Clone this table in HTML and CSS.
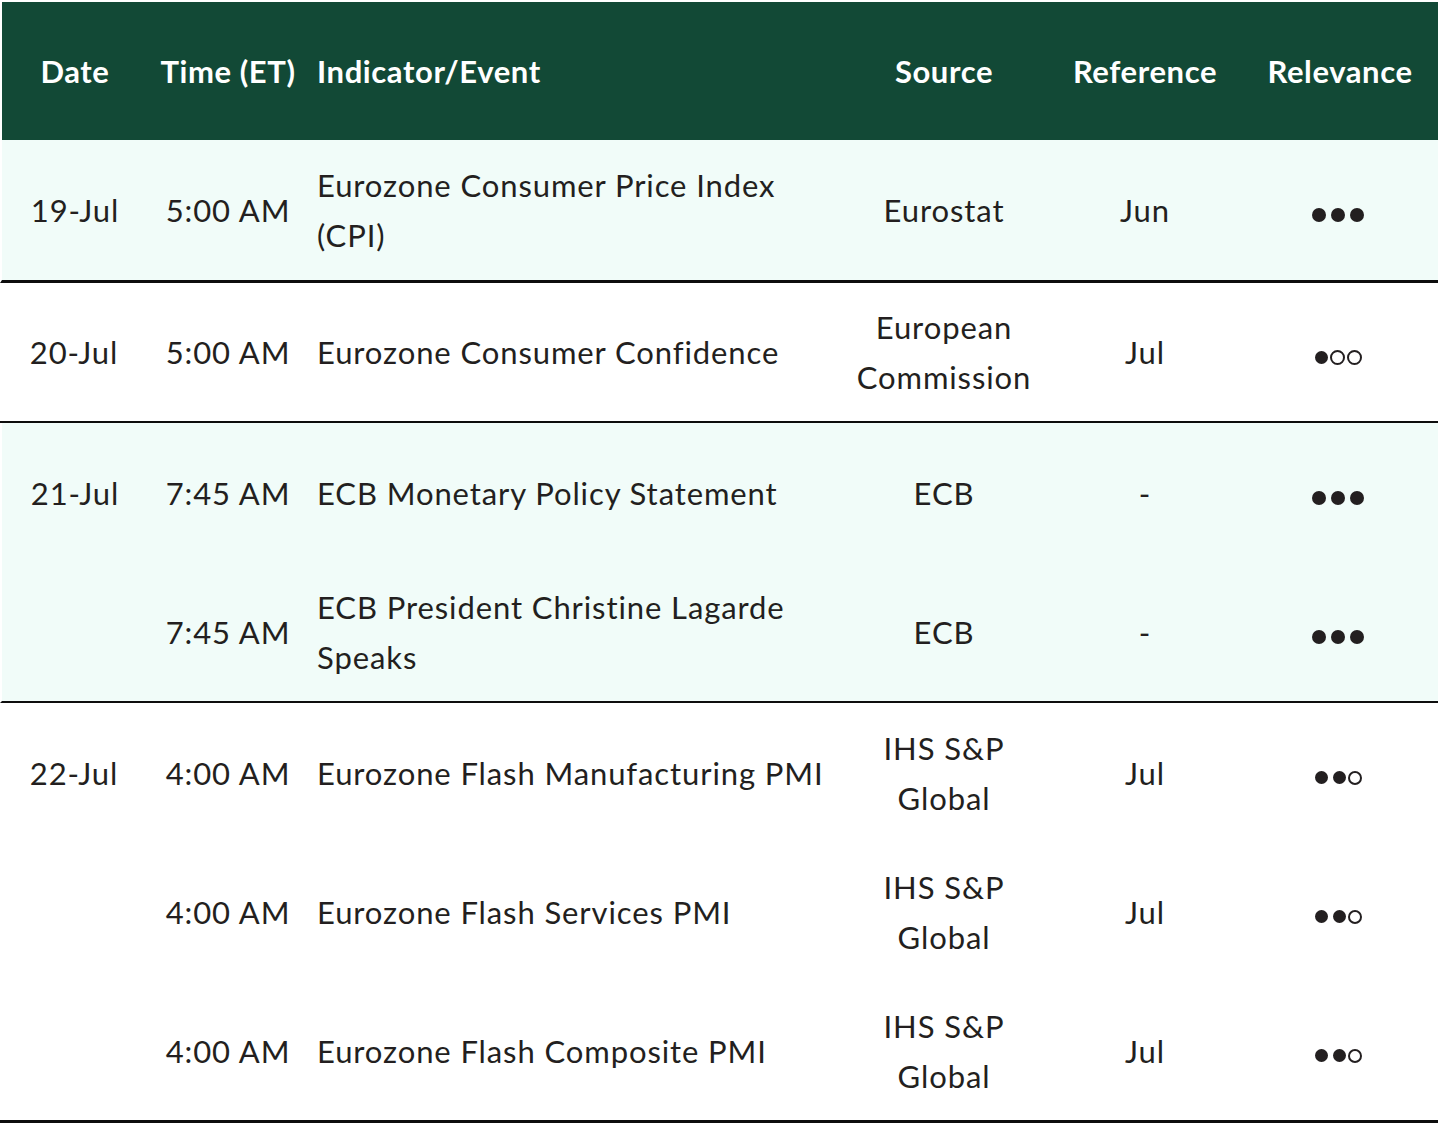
FILE: index.html
```html
<!DOCTYPE html>
<html lang="en">
<head>
<meta charset="utf-8">
<title>Eurozone Economic Calendar</title>
<link rel="stylesheet" href="styles.css">
</head>
<body>
<div class="wrap">
<table class="cal">
  <colgroup>
    <col class="c-date">
    <col class="c-time">
    <col class="c-ind">
    <col class="c-src">
    <col class="c-ref">
    <col class="c-rel">
  </colgroup>
  <thead>
    <tr>
      <th class="center">Date</th>
      <th class="center">Time (ET)</th>
      <th class="ind">Indicator/Event</th>
      <th class="center">Source</th>
      <th class="center">Reference</th>
      <th class="center rel">Relevance</th>
    </tr>
  </thead>
  <tbody class="tint end-thick">
    <tr class="r140">
      <td class="center">19-Jul</td>
      <td class="center">5:00 AM</td>
      <td class="ind">Eurozone Consumer Price Index<br>(CPI)</td>
      <td class="center">Eurostat</td>
      <td class="center">Jun</td>
      <td class="center rel"><span class="dots big"><i class="d"></i><i class="d"></i><i class="d"></i></span></td>
    </tr>
  </tbody>
  <tbody class="end-thin">
    <tr class="r138">
      <td class="center">20-Jul</td>
      <td class="center">5:00 AM</td>
      <td class="ind">Eurozone Consumer Confidence</td>
      <td class="center">European<br>Commission</td>
      <td class="center">Jul</td>
      <td class="center rel"><span class="dots"><i class="d"></i><i class="d o"></i><i class="d o"></i></span></td>
    </tr>
  </tbody>
  <tbody class="tint end-thin">
    <tr class="r139">
      <td class="center">21-Jul</td>
      <td class="center">7:45 AM</td>
      <td class="ind">ECB Monetary Policy Statement</td>
      <td class="center">ECB</td>
      <td class="center">-</td>
      <td class="center rel"><span class="dots big"><i class="d"></i><i class="d"></i><i class="d"></i></span></td>
    </tr>
    <tr class="r139">
      <td></td>
      <td class="center">7:45 AM</td>
      <td class="ind">ECB President Christine Lagarde<br>Speaks</td>
      <td class="center">ECB</td>
      <td class="center">-</td>
      <td class="center rel"><span class="dots big"><i class="d"></i><i class="d"></i><i class="d"></i></span></td>
    </tr>
  </tbody>
  <tbody class="end-thick">
    <tr class="r139">
      <td class="center">22-Jul</td>
      <td class="center">4:00 AM</td>
      <td class="ind">Eurozone Flash Manufacturing PMI</td>
      <td class="center">IHS S&amp;P<br>Global</td>
      <td class="center">Jul</td>
      <td class="center rel"><span class="dots"><i class="d"></i><i class="d"></i><i class="d o sm"></i></span></td>
    </tr>
    <tr class="r139">
      <td></td>
      <td class="center">4:00 AM</td>
      <td class="ind">Eurozone Flash Services PMI</td>
      <td class="center">IHS S&amp;P<br>Global</td>
      <td class="center">Jul</td>
      <td class="center rel"><span class="dots"><i class="d"></i><i class="d"></i><i class="d o sm"></i></span></td>
    </tr>
    <tr class="r139">
      <td></td>
      <td class="center">4:00 AM</td>
      <td class="ind">Eurozone Flash Composite PMI</td>
      <td class="center">IHS S&amp;P<br>Global</td>
      <td class="center">Jul</td>
      <td class="center rel"><span class="dots"><i class="d"></i><i class="d"></i><i class="d o sm"></i></span></td>
    </tr>
  </tbody>
</table>
</div>
</body>
</html>
```
FILE: styles.css
```css
html, body {
  margin: 0;
  padding: 0;
  background: #ffffff;
}

.wrap {
  padding-top: 2px;
}

.cal {
  width: 1438px;
  border-collapse: separate;
  border-spacing: 0;
  table-layout: fixed;
  font-family: Lato, "Open Sans", "Liberation Sans", sans-serif;
  font-size: 31px;
  line-height: 50px;
  letter-spacing: 0.9px;
  color: #231f20;
}

.c-date { width: 148px; }
.c-time { width: 160px; }
.c-ind  { width: 542px; }
.c-src  { width: 188px; }
.c-ref  { width: 214px; }
.c-rel  { width: 186px; }

.cal th,
.cal td {
  box-sizing: border-box;
  padding: 0;
  vertical-align: middle;
  font-weight: 400;
  white-space: nowrap;
}

.cal thead th {
  height: 138px;
  background: #124936;
  color: #ffffff;
  font-weight: 700;
  letter-spacing: 0.6px;
}

.cal thead th:first-child {
  border-left: 2px solid #ffffff;
}

.tint td {
  background: #f1fcf9;
}

.tint td:first-child {
  border-left: 2px solid #ffffff;
}

.center { text-align: center; }

.ind {
  text-align: left;
  padding-left: 9px !important;
  padding-right: 10px !important;
}

.rel {
  padding-right: 10px !important;
}

.rel .dots {
  left: -2px;
}

.r140 td { height: 140px; }
.r138 td { height: 138px; }
.r139 td { height: 139px; }

.end-thick tr:last-child td {
  border-bottom: 3px solid #0d0d0d;
}
.end-thick .r140 td { height: 143px; }
.end-thick tr.r139:last-child td { height: 142px; }

.end-thin tr:last-child td {
  border-bottom: 2px solid #0d0d0d;
}
.end-thin .r138 td { height: 140px; }
.end-thin tr.r139:last-child td { height: 141px; }

.dots {
  display: inline-flex;
  align-items: center;
  gap: 5px;
  vertical-align: middle;
  position: relative;
  top: 1px;
  letter-spacing: 0;
}

.dots .d {
  display: block;
  width: 13px;
  height: 13px;
  border-radius: 50%;
  background: #231f20;
  box-sizing: border-box;
}

.dots.big .d {
  width: 14px;
  height: 14px;
}

.dots .d.o {
  background: transparent;
  border: 2px solid #231f20;
  width: 15px;
  height: 15px;
}

.dots .d.o.sm {
  width: 14px;
  height: 14px;
}

.dots .d + .d.o {
  margin-left: -3px;
}
```
